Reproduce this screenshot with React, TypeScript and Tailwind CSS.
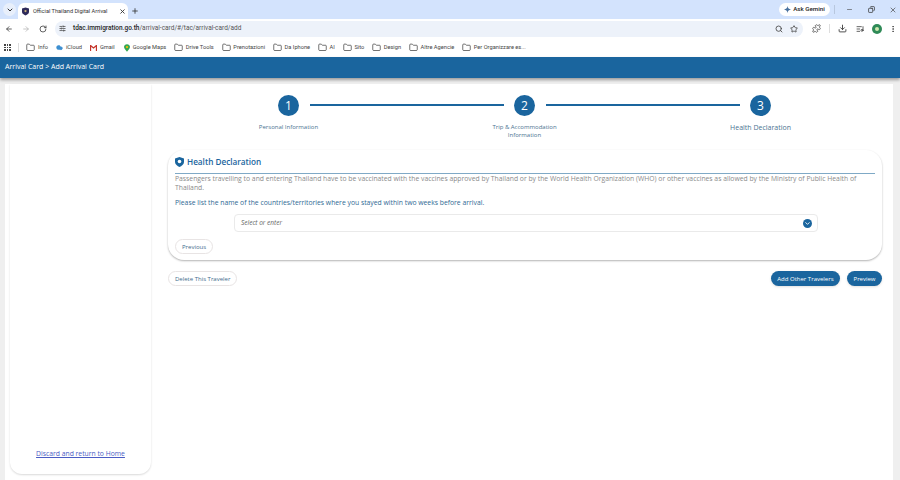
import { ArrowLeft, ArrowRight, ChevronDown, Cloud, Copy, Download, EllipsisVertical, Folder, ListMusic, Minus, Plus, Puzzle, RotateCw, Search, SlidersHorizontal, Star, X } from "lucide-react"

const bookmarks = ["Drive Tools", "Prenotazioni", "Da Iphone", "AI", "Sito", "Design", "Altre Agencie", "Per Organizzare es..."]

function Tabs() {
  return (
    <div className="h-[19px] bg-[#d3e3fd] flex items-end pl-[3px] font-['Roboto',sans-serif]">
      <div className="w-[13px] h-[13px] mb-[3px] rounded-full bg-[#e8effb] flex items-center justify-center">
        <ChevronDown size={8} strokeWidth={3} className="text-[#333]" />
      </div>
      <div className="ml-[2px] w-[110px] h-[16px] bg-white rounded-t-md flex items-center pl-[4px] pr-[2px]">
        <svg width="7" height="9" viewBox="0 0 8 9"><path d="M0 1 L4 0 L8 1 V5 C8 7 6 8 4 9 C2 8 0 7 0 5 Z" fill="#2e2a5a" /><circle cx="4" cy="4" r="1.3" fill="#c9b27a" /></svg>
        <span className="ml-[4px] w-[78px] whitespace-nowrap text-[5.6px] text-[#333]">Official Thailand Digital Arrival</span>
        <X size={7} strokeWidth={3} className="ml-[8px] text-[#333]" />
      </div>
      <Plus size={8} strokeWidth={2.5} className="ml-[3px] mb-[4px] text-[#333]" />
      <div className="ml-auto flex items-center mb-[3px] pr-[3px]">
        <div className="h-[13px] w-[51px] bg-white rounded-full flex items-center justify-center gap-[2px] text-[6.200px] font-medium text-[#222]">
          <svg width="7" height="7" viewBox="0 0 10 10"><path d="M5 0 C5.500 3 7 4.500 10 5 C7 5.500 5.500 7 5 10 C4.500 7 3 5.500 0 5 C3 4.500 4.500 3 5 0 Z" fill="#47709e" /></svg>
          Ask Gemini
        </div>
        <div className="w-px h-[9px] bg-[#b8c7de] ml-[4px]" />
        <Minus size={7} className="ml-[11px] text-[#444]" />
        <Copy size={7} strokeWidth={2.5} className="ml-[15px] text-[#333] -scale-x-100" />
        <X size={8} className="ml-[14px] text-[#444]" />
      </div>
    </div>
  )
}

function Toolbar() {
  return (
    <div className="h-[19px] bg-white flex items-center pl-[5px] pr-[2px] text-[#444] font-['Roboto',sans-serif]">
      <ArrowLeft size={8} strokeWidth={2.5} />
      <ArrowRight size={8} strokeWidth={2} className="ml-[9px] text-[#aaa]" />
      <RotateCw size={8} strokeWidth={2.5} className="ml-[9px]" />
      <div className="ml-[8px] w-[748px] h-[16px] bg-[#edf2fa] rounded-full flex items-center pl-[4px] pr-[5px]">
        <SlidersHorizontal size={7} strokeWidth={2.5} />
        <span className="ml-[7px] text-[6.500px] text-[#555]"><span className="text-[#1f1f1f] font-medium">tdac.immigration.go.th</span>/arrival-card/#/tac/arrival-card/add</span>
        <Search size={8} strokeWidth={2.5} className="ml-auto" />
        <Star size={8} strokeWidth={2.5} className="ml-[7px]" />
      </div>
      <Puzzle size={9} strokeWidth={2} className="ml-[9px]" />
      <div className="ml-[8px] w-px h-[9px] bg-[#ddd]" />
      <Download size={9} strokeWidth={2.5} className="ml-[8px]" />
      <ListMusic size={8} strokeWidth={2.5} className="ml-[9px]" />
      <div className="ml-[8px] w-[10px] h-[10px] rounded-full bg-[#2f8a57] flex items-center justify-center"><div className="w-[4px] h-[4px] rounded-full bg-[#cfe8b0]" /></div>
      <EllipsisVertical size={8} strokeWidth={2.5} className="ml-[7px]" />
    </div>
  )
}

function Bookmarks() {
  return (
    <div className="h-[19px] bg-white flex items-center pl-[4px] text-[5.700px] text-[#444] font-['Roboto',sans-serif] whitespace-nowrap">
      <div className="w-[7px] h-[7px] grid grid-cols-3 gap-px">
        {[0, 1, 2, 3, 4, 5, 6, 7, 8].map(i => <div key={i} className="bg-[#444]" />)}
      </div>
      <div className="ml-[7px] w-px h-[9px] bg-[#ddd]" />
      <Folder size={9} className="ml-[7px]" />
      <span className="ml-[3px]">Info</span>
      <Cloud size={7} fill="#3d8fd1" stroke="#3d8fd1" className="ml-[8px]" />
      <span className="ml-[3px]">iCloud</span>
      <svg className="ml-[8px]" width="7" height="6" viewBox="0 0 7 6"><path d="M0.500 6 V0.500 L3.500 3 L6.500 0.500 V6" fill="none" stroke="#c5362b" strokeWidth="1.300" /></svg>
      <span className="ml-[3px]">Gmail</span>
      <svg className="ml-[9px]" width="6" height="8" viewBox="0 0 7 9"><path d="M3.500 0 C5.500 0 7 1.500 7 3.400 C7 5.500 4.500 7.500 3.500 9 C2.500 7.500 0 5.500 0 3.400 C0 1.500 1.500 0 3.500 0 Z" fill="#34a853" /><circle cx="3.500" cy="3.400" r="1.300" fill="#fbbc04" /></svg>
      <span className="ml-[3px]">Google Maps</span>
      {bookmarks.map(b => (
        <div key={b} className="flex items-center ml-[8px]">
          <Folder size={9} />
          <span className="ml-[2.500px]">{b}</span>
        </div>
      ))}
    </div>
  )
}

function Step({ n, label, big }: { n: number, label: string, big?: boolean }) {
  return (
    <div className="w-[100px] flex flex-col items-center">
      <div className="w-[21px] h-[21px] rounded-full bg-[#1a659e] text-white text-[12px] flex items-center justify-center">{n}</div>
      <div className={`mt-[8px] w-[70px] text-center leading-[7.500px] text-[#4b7391] ${big ? "text-[7px]" : "text-[6px]"}`}>{label}</div>
    </div>
  )
}

function Connector() {
  return <div className="w-[194px] h-[2px] bg-[#1a659e] mt-[9px] mx-[-29px]" />
}

function Pill({ children, solid }: { children: string, solid?: boolean }) {
  return (
    <button className={`h-[15px] rounded-full text-[6px] leading-none whitespace-nowrap ${solid ? "px-[6.500px] bg-[#1a659e] text-white shadow-sm" : "px-[6px] bg-white text-[#3f6c8d] border border-[#e8e4e4]"}`}>{children}</button>
  )
}

export default function App() {
  return (
    <div className="w-[900px] h-[480px] overflow-hidden bg-white flex flex-col font-['Open_Sans',sans-serif]">
      <Tabs />
      <Toolbar />
      <Bookmarks />
      <div className="h-[21px] bg-[#1a659e] flex items-center pl-[5px] text-[7px] text-white shadow-[0_2px_3px_rgba(0,0,0,0.35)] relative">Arrival Card &gt; Add Arrival Card</div>
      <div className="flex-1 bg-[#efefef] pl-[5px] pr-[7px] pt-[6px] flex min-h-0">
        <div className="flex-1 bg-white flex">
          <aside className="w-[141px] ml-[5px] mb-[6px] bg-white rounded-b-xl shadow-[0_1px_2px_rgba(0,0,0,0.15)] flex flex-col items-center justify-end pb-[15px]">
            <a className="text-[6.800px] underline text-[#4a5cc4]">Discard and return to Home</a>
          </aside>
          <main className="ml-[17px] w-[714px] flex flex-col">
            <div className="flex justify-center pt-[11px] h-[66px] ml-[-1px]">
              <Step n={1} label="Personal Information" />
              <Connector />
              <Step n={2} label="Trip & Accommodation Information" />
              <Connector />
              <Step n={3} label="Health Declaration" big />
            </div>
            <section className="h-[110px] rounded-2xl bg-white shadow-[0_1px_2px_rgba(0,0,0,0.3)] px-[7px] pt-[5px]">
              <div className="flex items-center h-[19px] border-b border-[#7fa9c6] gap-[3px] text-[#1a659e] text-[8.200px] font-semibold pb-[4px]">
                <svg width="9" height="10" viewBox="0 0 9 10"><path d="M4.500 0 L9 1.500 V5 C9 7.500 6.500 9 4.500 10 C2.500 9 0 7.500 0 5 V1.500 Z" fill="#1a659e" /><circle cx="4.500" cy="4.500" r="1.800" fill="#ffffff" /></svg>
                Health Declaration
              </div>
              <p className="text-[6.800px] leading-[9px] text-[#8a8a8a]">Passengers travelling to and entering Thailand have to be vaccinated with the vaccines approved by Thailand or by the World Health Organization (WHO) or other vaccines as allowed by the Ministry of Public Health of Thailand.</p>
              <p className="mt-[6px] text-[6.800px] leading-[9px] text-[#2f6a94]">Please list the name of the countries/territories where you stayed within two weeks before arrival.</p>
              <div className="mt-[7px] ml-[59px] w-[584px] h-[18px] border border-[#eaeaea] rounded-sm flex items-center pl-[6px] pr-[5px] text-[6.500px] italic text-[#666]">
                Select or enter
                <div className="ml-auto w-[9px] h-[9px] rounded-full bg-[#1a659e] flex items-center justify-center">
                  <ChevronDown size={7} strokeWidth={3} className="text-white" />
                </div>
              </div>
              <div className="mt-[7px] flex"><Pill>Previous</Pill></div>
            </section>
            <div className="mt-[11px] flex items-center">
              <Pill>Delete This Traveler</Pill>
              <div className="ml-auto flex gap-[7px]">
                <Pill solid>Add Other Travelers</Pill>
                <Pill solid>Preview</Pill>
              </div>
            </div>
          </main>
        </div>
      </div>
    </div>
  )
}
